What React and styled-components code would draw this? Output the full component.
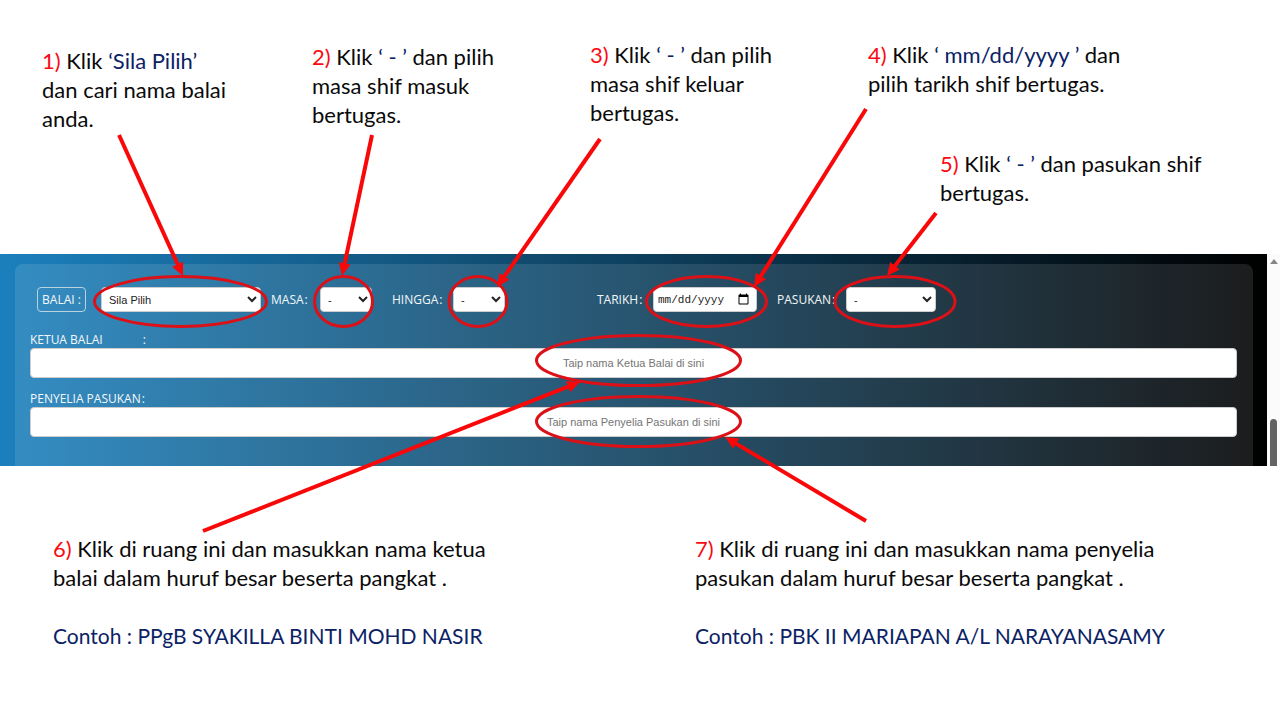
import React from "react";
import styled, { createGlobalStyle } from "styled-components";

const GlobalStyle = createGlobalStyle`
  *, *::before, *::after { box-sizing: border-box; }
  body { margin: 0; background: #fff; }
`;

const Guide = styled.main`
  position: relative;
  min-height: 720px;
  overflow: hidden;
  font-family: Lato, "Open Sans", sans-serif;
`;

const TopNotes = styled.section`
  display: grid;
  grid-template-columns: 270fr 278fr 278fr 412fr;
  min-height: 254px;
  padding: 40px 0 0 42px;
`;

const BottomNotes = styled.section`
  display: grid;
  grid-template-columns: 642fr 585fr;
  padding: 68px 0 40px 53px;
`;

const NoteStack = styled.div`
  display: flex;
  flex-direction: column;
  gap: 51px;
`;

const Note = styled.p`
  margin: 0;
  padding-top: ${(p) => p.$drop || 0}px;
  padding-left: ${(p) => p.$indent || 0}px;
  font-size: 22px;
  line-height: 29px;
  color: #0a0a0a;
  white-space: nowrap;
`;

const Step = styled.span`
  color: #fa0a10;
`;

const Term = styled.span`
  color: #0b2265;
`;

const Example = styled(Note)`
  margin-top: 29px;
  font-size: 21px;
  color: #0b2265;
`;

const Band = styled.section`
  display: flex;
  height: 212px;
  overflow: hidden;
`;

const Backdrop = styled.div`
  flex: 1;
  padding: 10px 14px 0 15px;
  background: linear-gradient(to right, #1b80bd, #000);
`;

const Panel = styled.form`
  height: 100%;
  padding: 22px 16px 0 15px;
  border-radius: 8px 8px 0 0;
  background: rgba(255, 255, 255, 0.11);
  color: #f4f8fa;
  font-family: "Open Sans", "Noto Sans", sans-serif;
  font-size: 12px;
  line-height: 16px;
`;

const FilterRow = styled.div`
  display: grid;
  grid-template-columns: 234fr 121fr 205fr 180fr 460fr;
  align-items: center;
  height: 27px;
  padding-left: 7px;
  margin-bottom: 19px;
`;

const Filter = styled.div`
  display: flex;
  align-items: center;
`;

const FilterLabel = styled.label`
  display: flex;
  flex: none;
  gap: 1px;
  width: ${(p) => p.$width}px;
  white-space: nowrap;
`;

const BoxedLabel = styled.label`
  flex: none;
  width: 49px;
  height: 25px;
  margin-right: 15px;
  border: 1px solid #b9d3e3;
  border-radius: 4px;
  line-height: 24px;
  text-align: center;
  white-space: nowrap;
`;

const Select = styled.select`
  flex: none;
  width: ${(p) => p.$width}px;
  height: 25px;
  padding: 0 0 0 3px;
  border: 1px solid #ccc;
  border-radius: 4px;
  background: #fff;
  color: #222;
  font: 11px "Liberation Sans", sans-serif;
`;

const DateInput = styled.input`
  flex: none;
  width: 104px;
  height: 25px;
  padding: 0 6px 0 4px;
  border: 1px solid #ccc;
  border-radius: 4px;
  background: #fff;
  color: #222;
  font: 11px "Liberation Mono", monospace;

  &::-webkit-datetime-edit-fields-wrapper { padding: 0; }
  &::-webkit-datetime-edit-month-field,
  &::-webkit-datetime-edit-day-field,
  &::-webkit-datetime-edit-year-field { padding: 0; }
  &::-webkit-calendar-picker-indicator { width: 13px; height: 13px; padding: 0; margin: 0; }
`;

const NameField = styled.div`
  display: flex;
  flex-direction: column;
  margin-bottom: 13px;
`;

const NameLabel = styled.label`
  display: flex;
  gap: ${(p) => p.$gap || 1}px;
`;

const NameInput = styled.input`
  width: 100%;
  height: 30px;
  border: 1px solid #ccc;
  border-radius: 4px;
  background: #fff;
  font: 11px "Liberation Sans", sans-serif;
  text-align: center;

  &::placeholder { color: #757575; opacity: 1; }
`;

const ScrollTrack = styled.div`
  display: flex;
  flex: none;
  flex-direction: column;
  align-items: center;
  justify-content: space-between;
  width: 13px;
  padding-top: 5px;
  background: #fbfbfb;
`;

const ScrollArrow = styled.span`
  border: 4px solid transparent;
  border-top-width: 0;
  border-bottom: 5px solid #868686;
`;

const ScrollThumb = styled.span`
  width: 7px;
  height: 47px;
  border-radius: 4px 4px 0 0;
  background: #636363;
`;

const Marks = styled.svg`
  position: absolute;
  top: 0;
  left: 0;
  width: 100%;
  height: 720px;
  pointer-events: none;
`;

const rings = [
  [180.5, 301.5, 86, 25],
  [343.5, 301.5, 29, 25],
  [478, 301.5, 29, 25],
  [706.5, 301.5, 60, 25],
  [895, 301.5, 60, 25],
  [638.5, 360.5, 102, 25],
  [638.5, 421.5, 102, 25],
];

const arrows = [
  [119, 135, 183, 276],
  [372, 135, 342, 276],
  [600, 139, 497, 287],
  [866, 109, 754, 287],
  [936, 213, 887, 276],
  [203, 531, 580, 382],
  [866, 521, 725, 437],
];

function Annotations() {
  return (
    <Marks viewBox="0 0 1280 720" preserveAspectRatio="none" aria-hidden="true">
      <defs>
        <marker id="head" markerUnits="userSpaceOnUse" markerWidth="14" markerHeight="14" refX="13" refY="6" orient="auto">
          <path d="M0 0L13 6L0 12Z" fill="#f80808" />
        </marker>
      </defs>
      {rings.map(([cx, cy, rx, ry]) => (
        <ellipse key={`${cx}-${cy}`} cx={cx} cy={cy} rx={rx} ry={ry} fill="none" stroke="#dc1017" strokeWidth="3" />
      ))}
      {arrows.map(([x1, y1, x2, y2]) => {
        const length = Math.hypot(x2 - x1, y2 - y1);
        const t = (length - 10) / length;
        return (
          <g key={`${x1}-${y1}`}>
            <line x1={x1} y1={y1} x2={x1 + (x2 - x1) * t} y2={y1 + (y2 - y1) * t} stroke="#f80808" strokeWidth="4" />
            <line x1={x1} y1={y1} x2={x2} y2={y2} stroke="none" markerEnd="url(#head)" />
          </g>
        );
      })}
    </Marks>
  );
}

export default function App() {
  return (
    <Guide>
      <GlobalStyle />
      <TopNotes>
        <Note $drop={6}>
          <Step>1)</Step> Klik <Term>‘Sila Pilih’</Term><br />
          dan cari nama balai<br />
          anda.
        </Note>
        <Note $drop={2}>
          <Step>2)</Step> Klik <Term>‘ - ’</Term> dan pilih<br />
          masa shif masuk<br />
          bertugas.
        </Note>
        <Note>
          <Step>3)</Step> Klik <Term>‘ - ’</Term> dan pilih<br />
          masa shif keluar<br />
          bertugas.
        </Note>
        <NoteStack>
          <Note>
            <Step>4)</Step> Klik <Term>‘ mm/dd/yyyy ’</Term> dan<br />
            pilih tarikh shif bertugas.
          </Note>
          <Note $indent={72}>
            <Step>5)</Step> Klik <Term>‘ - ’</Term> dan pasukan shif<br />
            bertugas.
          </Note>
        </NoteStack>
      </TopNotes>

      <Band>
        <Backdrop>
          <Panel>
            <FilterRow>
              <Filter>
                <BoxedLabel htmlFor="balai">BALAI :</BoxedLabel>
                <Select id="balai" $width={160}><option>Sila Pilih</option></Select>
              </Filter>
              <Filter>
                <FilterLabel htmlFor="masa" $width={49}><span>MASA</span> <span>:</span></FilterLabel>
                <Select id="masa" $width={52}><option>-</option></Select>
              </Filter>
              <Filter>
                <FilterLabel htmlFor="hingga" $width={61}><span>HINGGA</span> <span>:</span></FilterLabel>
                <Select id="hingga" $width={52}><option>-</option></Select>
              </Filter>
              <Filter>
                <FilterLabel htmlFor="tarikh" $width={56}><span>TARIKH</span> <span>:</span></FilterLabel>
                <DateInput id="tarikh" type="date" />
              </Filter>
              <Filter>
                <FilterLabel htmlFor="pasukan" $width={69}><span>PASUKAN</span> <span>:</span></FilterLabel>
                <Select id="pasukan" $width={90}><option>-</option></Select>
              </Filter>
            </FilterRow>
            <NameField>
              <NameLabel htmlFor="ketua" $gap={40}><span>KETUA BALAI</span> <span>:</span></NameLabel>
              <NameInput id="ketua" type="text" placeholder="Taip nama Ketua Balai di sini" />
            </NameField>
            <NameField>
              <NameLabel htmlFor="penyelia"><span>PENYELIA PASUKAN</span> <span>:</span></NameLabel>
              <NameInput id="penyelia" type="text" placeholder="Taip nama Penyelia Pasukan di sini" />
            </NameField>
          </Panel>
        </Backdrop>
        <ScrollTrack aria-hidden="true">
          <ScrollArrow />
          <ScrollThumb />
        </ScrollTrack>
      </Band>

      <BottomNotes>
        <div>
          <Note>
            <Step>6)</Step> Klik di ruang ini dan masukkan nama ketua<br />
            balai dalam huruf besar beserta pangkat .
          </Note>
          <Example>Contoh : PPgB SYAKILLA BINTI MOHD NASIR</Example>
        </div>
        <div>
          <Note>
            <Step>7)</Step> Klik di ruang ini dan masukkan nama penyelia<br />
            pasukan dalam huruf besar beserta pangkat .
          </Note>
          <Example>Contoh : PBK II MARIAPAN A/L NARAYANASAMY</Example>
        </div>
      </BottomNotes>

      <Annotations />
    </Guide>
  );
}
